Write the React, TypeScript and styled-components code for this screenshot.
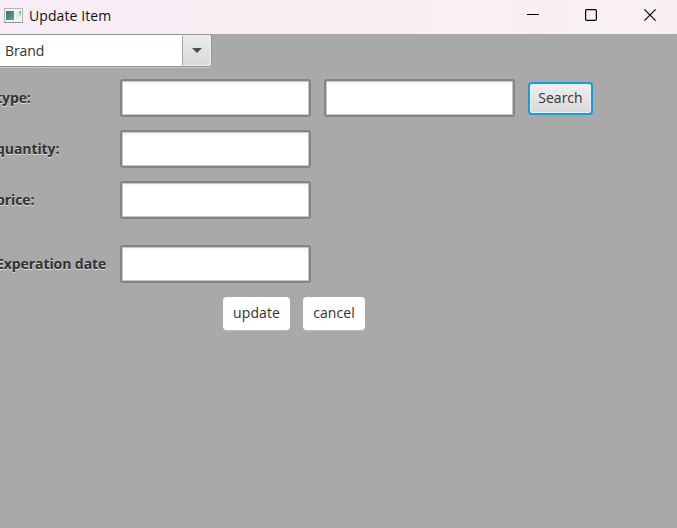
import React from 'react';
import styled, { createGlobalStyle } from 'styled-components';

const GlobalStyle = createGlobalStyle`
  * { box-sizing: border-box; }
  body { margin: 0; overflow: hidden; background: #a9a9a9; }
`;

const Window = styled.div`
  width: 677px;
  height: 528px;
  overflow: hidden;
  background: #a9a9a9;
  color: #323232;
  font: 15px/20px "Open Sans", "Noto Sans", sans-serif;
`;

const TitleBar = styled.header`
  display: flex;
  align-items: center;
  height: 34px;
  padding-left: 4px;
  background: linear-gradient(90deg, #f8edf6, #faeef3 60%, #f8f0f0);
`;

const Title = styled.h1`
  flex: 1;
  margin: 0 0 2px 6px;
  color: #111;
  font-size: 14px;
  font-weight: 400;
  letter-spacing: 0.08px;
`;

const WindowControls = styled.div`
  display: flex;
  height: 30px;
  margin: 0 -3px 4px 0;
`;

const ControlButton = styled.button<{ $width: number }>`
  display: flex;
  align-items: center;
  justify-content: center;
  width: ${(p) => p.$width}px;
  padding: 0;
  border: 0;
  background: transparent;
`;

const ComboBox = styled.div`
  display: flex;
  width: 212px;
  height: 33px;
  border: solid #929292;
  border-width: 1px 1px 1px 0;
  border-radius: 0 3px 4px 0;
  background: #fff;
  box-shadow: 0 1px 0 #c9c9c9;
`;

const ComboValue = styled.span`
  flex: 1;
  padding: 6px 0 0 5px;
  font-size: 14px;
  letter-spacing: -0.1px;
`;

const ComboArrow = styled.span`
  display: flex;
  align-items: center;
  justify-content: center;
  width: 29px;
  border: 1px solid #f2f2f2;
  border-left-color: #a5a5a5;
  border-radius: 0 3px 3px 0;
  background: linear-gradient(#ececec, #d9d9d9);
`;

const Form = styled.form`
  display: flex;
  flex-direction: column;
  gap: 13px;
  padding-top: 12px;
`;

const Row = styled.div<{ $offset?: number }>`
  display: flex;
  align-items: center;
  gap: 13px;
  height: 38px;
  margin-top: ${(p) => p.$offset ?? 0}px;
`;

const Label = styled.label`
  width: 111px;
  margin: 0 0 1px -4px;
  white-space: nowrap;
  font-size: 14px;
  font-weight: 700;
  letter-spacing: -0.08px;
  text-shadow: 0 1px 0 #dedede;
`;

const TextField = styled.input`
  width: 191px;
  height: 38px;
  padding: 0 8px;
  border: 2px solid #848484;
  border-radius: 3px;
  outline: 0;
  background: linear-gradient(#f3f3f3, #fff 5px);
  box-shadow: inset 0 0 0 1px #c6c6c6;
  font: inherit;
`;

const SearchButton = styled.button`
  width: 65px;
  height: 33px;
  padding: 0;
  border: 2px solid #129fd6;
  border-radius: 4px;
  background: linear-gradient(#efefef, #d9d9d9);
  box-shadow: inset 0 0 0 1px #f1f1f1, 0 0 1px #5aaccd;
  color: #323232;
  font: 14px/20px "Open Sans", "Noto Sans", sans-serif;
`;

const Actions = styled.div`
  display: flex;
  gap: 13px;
  margin: 1px 0 0 223px;
`;

const ActionButton = styled.button<{ $width: number }>`
  width: ${(p) => p.$width}px;
  height: 33px;
  padding: 0 0 2px;
  border: 0;
  border-radius: 4px;
  background: #fff;
  box-shadow: 0 1px 0 #bcbcbc;
  color: #323232;
  font: 14px/20px "Open Sans", "Noto Sans", sans-serif;
  letter-spacing: 0.08px;
`;

const IconSvg = styled.svg`
  margin-bottom: 3px;
`;

const AppIcon = () => (
  <IconSvg width="19" height="16" viewBox="0 0 19 16" aria-hidden="true">
    <defs>
      <linearGradient id="screen" x2="1" y2="1">
        <stop stopColor="#356e91" />
        <stop offset="1" stopColor="#5caf79" />
      </linearGradient>
      <linearGradient id="meter" x2="0" y2="1">
        <stop stopColor="#6eb695" />
        <stop offset="1" stopColor="#e3eeea" />
      </linearGradient>
    </defs>
    <rect x=".5" y=".5" width="18" height="14" fill="#f3f4f4" stroke="#b3b5b8" />
    <path d="M0 14.5h19" stroke="#8e9296" />
    <rect x="2" y="3" width="8" height="9" fill="url(#screen)" />
    <path d="M12 3h3v6l-2 3h-1z" fill="#e6eeeb" />
    <rect x="15" y="3" width="2" height="6" fill="url(#meter)" />
  </IconSvg>
);

export default function App() {
  return (
    <Window>
      <GlobalStyle />
      <TitleBar>
        <AppIcon />
        <Title>Update Item</Title>
        <WindowControls>
          <ControlButton $width={58} aria-label="Minimize">
            <svg width="12" height="12"><path d="M0 5.5h12" stroke="#000" /></svg>
          </ControlButton>
          <ControlButton $width={58} aria-label="Maximize">
            <svg width="12" height="12"><rect x=".6" y=".6" width="10.8" height="10.8" rx="1.2" fill="none" stroke="#000" strokeWidth="1.2" /></svg>
          </ControlButton>
          <ControlButton $width={60} aria-label="Close">
            <svg width="12" height="12"><path d="m.4.4 11.2 11.2M11.6.4.4 11.6" stroke="#000" strokeWidth="1.2" /></svg>
          </ControlButton>
        </WindowControls>
      </TitleBar>
      <ComboBox>
        <ComboValue>Brand</ComboValue>
        <ComboArrow>
          <svg width="10" height="5"><path d="M0 0h10L5 5z" fill="#4d4d4d" /></svg>
        </ComboArrow>
      </ComboBox>
      <Form onSubmit={(e) => e.preventDefault()}>
        <Row>
          <Label>type:</Label>
          <TextField aria-label="type" />
          <TextField aria-label="type search" />
          <SearchButton>Search</SearchButton>
        </Row>
        <Row>
          <Label>quantity:</Label>
          <TextField aria-label="quantity" />
        </Row>
        <Row>
          <Label>price:</Label>
          <TextField aria-label="price" />
        </Row>
        <Row $offset={13}>
          <Label>Experation date</Label>
          <TextField aria-label="Experation date" />
        </Row>
        <Actions>
          <ActionButton $width={67}>update</ActionButton>
          <ActionButton $width={62}>cancel</ActionButton>
        </Actions>
      </Form>
    </Window>
  );
}
